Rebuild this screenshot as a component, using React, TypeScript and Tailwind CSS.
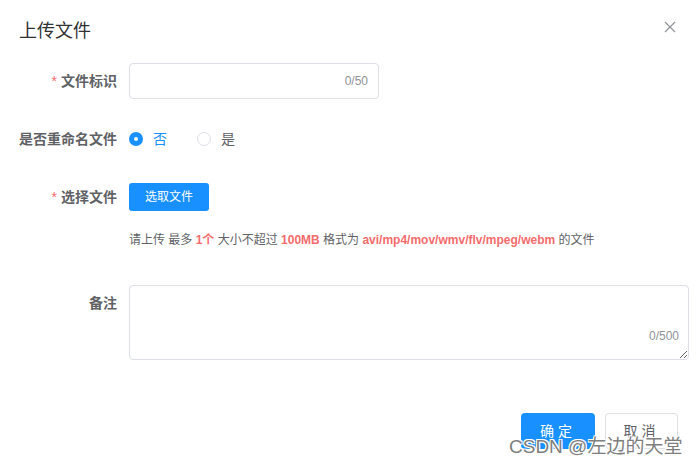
import React from "react";

const FONT = { fontFamily: '"Liberation Sans", "Noto Sans CJK SC", "Noto Sans", sans-serif' };

const Label: React.FC<{ text: string; required?: boolean }> = ({ text, required }) => (
  <div className="w-[110px] pr-3 h-9 flex items-center justify-end text-[14px] font-bold text-[#606266] shrink-0">
    {required && <span className="text-[#f56c6c] mr-1 font-normal">*</span>}
    {text}
  </div>
);

const App: React.FC = () => {
  return (
    <div className="w-[698px] h-[466px] bg-white relative overflow-hidden" style={FONT}>
      {/* Header */}
      <div className="pt-[19px] pl-[19px] h-[63px]">
        <h2 className="text-[18px] leading-[24px] text-[#303133]">上传文件</h2>
      </div>
      <button className="absolute top-[21px] left-[664px] w-3 h-3 text-[#909399]">
        <svg viewBox="0 0 12 12" width="12" height="12">
          <path d="M1 1L11 11M11 1L1 11" stroke="currentColor" strokeWidth="1.2" fill="none" />
        </svg>
      </button>

      {/* Form */}
      <div className="pl-[19px] flex flex-col">
        <div className="flex">
          <Label text="文件标识" required />
          <div className="w-[250px] h-9 border border-[#dcdfe6] rounded-[4px] flex items-center justify-end pr-[10px] text-[12px] text-[#909399]">
            0/50
          </div>
        </div>

        <div className="flex mt-[22px]">
          <Label text="是否重命名文件" />
          <div className="flex items-center h-9 text-[14px]">
            <span className="w-[14px] h-[14px] rounded-full bg-[#1890ff] flex items-center justify-center">
              <span className="w-1 h-1 rounded-full bg-white" />
            </span>
            <span className="ml-[10px] text-[#1890ff]">否</span>
            <span className="ml-[30px] w-[14px] h-[14px] rounded-full border border-[#dcdfe6]" />
            <span className="ml-[10px] text-[#606266]">是</span>
          </div>
        </div>

        <div className="flex mt-[22px]">
          <Label text="选择文件" required />
          <div className="flex flex-col">
            <div className="h-9 flex items-center">
              <button className="w-20 h-7 rounded-[3px] bg-[#1890ff] text-white text-[12px]">选取文件</button>
            </div>
            <div className="mt-[17px] text-[12px] leading-4 text-[#606266]">
              请上传 最多 <b className="text-[#f56c6c]">1个</b> 大小不超过{" "}
              <b className="text-[#f56c6c]">100MB</b> 格式为{" "}
              <b className="text-[#f56c6c]">avi/mp4/mov/wmv/flv/mpeg/webm</b> 的文件
            </div>
          </div>
        </div>

        <div className="flex mt-[37px]">
          <Label text="备注" />
          <div className="relative w-[560px] h-[75px]">
            <textarea className="w-full h-full border border-[#dcdfe6] rounded-[4px] resize-y outline-none block" />
            <span className="absolute right-[10px] bottom-[15px] text-[12px] text-[#909399] bg-white">0/500</span>
          </div>
        </div>
      </div>

      {/* Footer */}
      <div className="flex justify-end gap-[10px] pr-5 mt-[53px]">
        <button className="w-[74px] h-9 rounded-[4px] bg-[#1890ff] text-white text-[14px] tracking-[4px]">确定</button>
        <button className="w-[73px] h-9 rounded-[4px] border border-[#dcdfe6] text-[#606266] text-[14px] tracking-[4px]">取消</button>
      </div>

      {/* Watermark */}
      <div className="absolute left-[509px] top-[434px] text-[19px] leading-[26px] text-[#7f7f7f] [text-shadow:1px_1px_0_#fff,-1px_-1px_0_#fff,1px_-1px_0_#fff,-1px_1px_0_#fff]">
        CSDN @左边的天堂
      </div>
    </div>
  );
};

export default App;
